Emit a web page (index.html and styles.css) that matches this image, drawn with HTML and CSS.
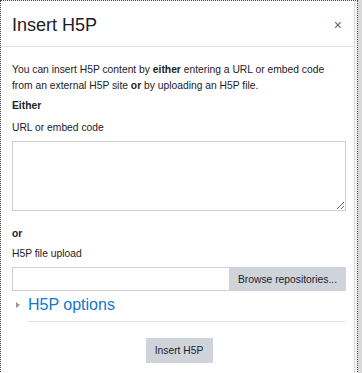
FILE: index.html
```html
<!DOCTYPE html>
<html lang="en">
<head>
    <meta charset="UTF-8">
    <title>Insert H5P</title>
    <link rel="stylesheet" href="styles.css">
</head>
<body>
    <div class="modal-dialog">
        <div class="modal-content">
            <div class="modal-header">
                <h5 class="modal-title">Insert H5P</h5>
                <button class="close" type="button">&times;</button>
            </div>
            <div class="modal-body">
                <p class="intro">You can insert H5P content by <strong>either</strong> entering a URL or embed code from an external H5P site <strong>or</strong> by uploading an H5P file.</p>
                <div class="label-strong">Either</div>
                <label class="field-label">URL or embed code</label>
                <textarea class="embed-input"></textarea>
                <div class="label-strong label-or">or</div>
                <label class="field-label">H5P file upload</label>
                <div class="file-row">
                    <div class="file-name"></div>
                    <button class="btn btn-secondary btn-browse" type="button">Browse repositories...</button>
                </div>
                <div class="options-toggle">
                    <span class="caret"></span>
                    <a class="options-link" href="#">H5P options</a>
                </div>
                <hr class="options-rule">
                <div class="footer">
                    <button class="btn btn-secondary" type="button">Insert H5P</button>
                </div>
            </div>
        </div>
    </div>
</body>
</html>
```

FILE: styles.css
```css
:root {
    --text-color: #1d2125;
    --border-color: #dee2e6;
    --btn-grey: #ced4da;
    --link-color: #1177d1;
}

body {
    margin: 0;
    padding: 0;
    background: #d9d9d9;
    font-family: "Liberation Sans", Arial, sans-serif;
    color: var(--text-color);
}

.modal-dialog {
    width: 356px;
    height: 373px;
    border: 1px dotted #444;
    border-bottom: none;
    background: #f4f4f4;
}

.modal-content {
    width: 353px;
    height: 100%;
    background: #fff;
    border-right: 1px solid #d6d6d6;
}

.modal-header {
    display: flex;
    align-items: center;
    justify-content: space-between;
    height: 46px;
    padding: 3px 12px 0 11px;
    box-sizing: border-box;
    border-bottom: 1px solid var(--border-color);
}

.modal-title {
    margin: 0;
    font-size: 18px;
    font-weight: 400;
}

.close {
    border: none;
    background: none;
    padding: 0;
    margin-right: 0;
    font-family: "Liberation Sans", Arial, sans-serif;
    font-size: 14px;
    color: #666;
    cursor: pointer;
}

.modal-body {
    padding: 15px 7px 0 11px;
    font-size: 10.3px;
    line-height: 15.5px;
}

.intro {
    margin: 0 0 5px 0;
}

.label-strong {
    font-weight: 700;
}

.field-label {
    display: block;
    margin: 6px 0 6px 0;
}

.embed-input {
    display: block;
    box-sizing: border-box;
    width: 334px;
    height: 70px;
    margin: 0;
    border: 1px solid #cfcfcf;
    border-radius: 0;
}

.label-or {
    margin-top: 15px;
}

.label-or + .field-label {
    margin: 4px 0 4px 0;
}

.file-row {
    display: flex;
    width: 334px;
    height: 24px;
    margin-top: 6px;
}

.file-name {
    flex: 1;
    border: 1px solid #cfcfcf;
    border-right: none;
    height: 22px;
}

.btn {
    border: none;
    border-radius: 0;
    font-family: "Liberation Sans", Arial, sans-serif;
    font-size: 10.3px;
    color: var(--text-color);
    cursor: pointer;
}

.btn-secondary {
    background: var(--btn-grey);
}

.btn-browse {
    width: 117px;
    height: 24px;
    padding: 0;
}

.options-toggle {
    display: flex;
    align-items: center;
    height: 28px;
    padding-left: 4px;
}

.caret {
    width: 0;
    height: 0;
    border-top: 3.5px solid transparent;
    border-bottom: 3.5px solid transparent;
    border-left: 4px solid #999;
    margin-right: 8px;
}

.options-link {
    font-size: 16px;
    color: var(--link-color);
    text-decoration: none;
}

.options-rule {
    width: 318px;
    margin: 2px 0 0 16px;
    border: none;
    border-top: 1px solid var(--border-color);
}

.footer {
    display: flex;
    justify-content: center;
    padding-top: 16px;
    width: 334px;
}

.footer .btn {
    width: 67px;
    height: 25px;
    padding: 0;
}
```
